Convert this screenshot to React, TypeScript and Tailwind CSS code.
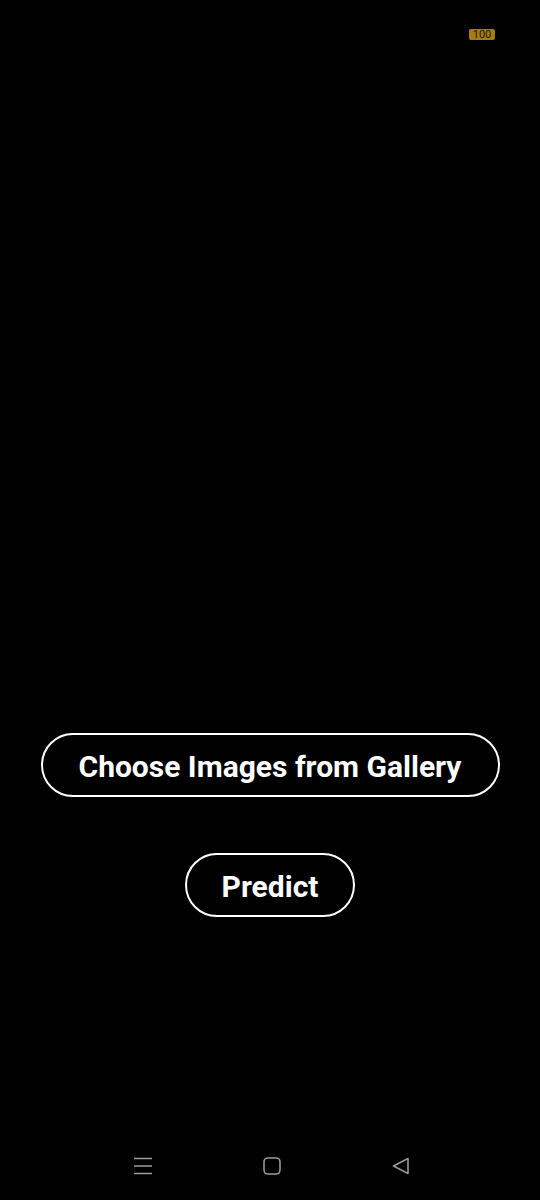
const MenuIcon = () => (
  <svg width="20" height="20" viewBox="0 0 20 20" fill="none" stroke="#9a9a9a" strokeWidth="1.6">
    <path d="M1 2.5h18M1 10h18M1 17.5h18" />
  </svg>
);

const HomeIcon = () => (
  <svg width="20" height="20" viewBox="0 0 20 20" fill="none" stroke="#9a9a9a" strokeWidth="1.6">
    <rect x="2" y="2" width="16" height="16" rx="4" />
  </svg>
);

const BackIcon = () => (
  <svg width="20" height="20" viewBox="0 0 20 20" fill="none" stroke="#9a9a9a" strokeWidth="1.6" strokeLinejoin="round">
    <path d="M17 2.5v15L2.5 10z" />
  </svg>
);

const App = () => {
  return (
    <div className="flex h-[1200px] w-[540px] flex-col bg-black font-['Roboto',sans-serif]">
      <div className="flex justify-end pr-[45px] pt-[29px]">
        <span className="flex h-[11px] w-[26px] items-center justify-center rounded-[2px] bg-[#a57c10] text-[11px] leading-none text-[#1e1700]">
          100
        </span>
      </div>

      <div className="mt-[693px] flex flex-col items-center gap-[56px]">
        <button className="h-[64px] w-[459px] rounded-full border-[2.5px] border-white pt-[2px] text-[30px] font-bold text-white">
          Choose Images from Gallery
        </button>
        <button className="h-[64px] w-[170px] rounded-full border-[2.5px] border-white pt-[2px] text-[30px] font-bold text-white">
          Predict
        </button>
      </div>

      <div className="mt-auto flex justify-center gap-[109px] pb-[24px] pl-[3px]">
        <MenuIcon />
        <HomeIcon />
        <BackIcon />
      </div>
    </div>
  );
};

export default App;
